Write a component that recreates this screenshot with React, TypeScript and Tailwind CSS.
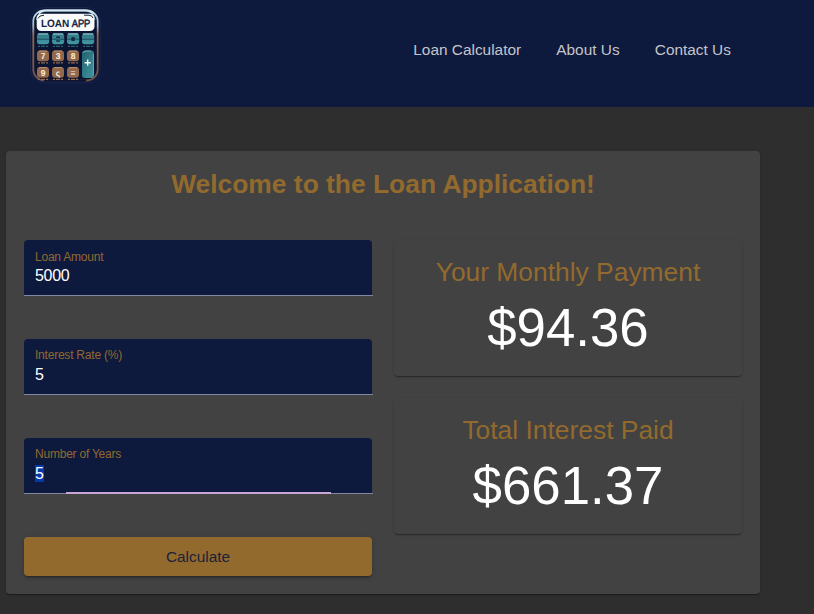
const keysTop = [37, 52, 67, 82];

const brownKeys = [
  { x: 37, y: 50.5, label: "7" },
  { x: 52, y: 50.5, label: "3" },
  { x: 67, y: 50.5, label: "8" },
  { x: 37, y: 67, label: "9" },
  { x: 52, y: 67, label: "ς" },
  { x: 67, y: 67, label: "≡" },
];

function Logo() {
  return (
    <svg width="84" height="90" viewBox="24 0 84 90" className="block" fontFamily="'Liberation Sans', Arial, sans-serif" textRendering="geometricPrecision">
      <defs>
        <linearGradient id="teal" x1="0" x2="0" y1="0" y2="1">
          <stop offset="0" stopColor="#337484" />
          <stop offset="1" stopColor="#4199a4" />
        </linearGradient>
        <linearGradient id="plus" x1="0" x2="1" y1="0" y2="1">
          <stop offset="0" stopColor="#24606f" />
          <stop offset="1" stopColor="#3f98a2" />
        </linearGradient>
        <linearGradient id="rim" x1="0" x2="0" y1="0" y2="1">
          <stop offset="0" stopColor="#b9dce6" />
          <stop offset="0.22" stopColor="#a9bcc6" />
          <stop offset="0.36" stopColor="#8d6850" />
          <stop offset="1" stopColor="#6e5245" />
        </linearGradient>
      </defs>
      <rect x="30.5" y="7.5" width="70" height="75.5" rx="13" fill="#10173c" stroke="#15244a" strokeWidth="1" />
      <rect x="33.3" y="10.3" width="64.4" height="70.2" rx="11" fill="#0b1432" stroke="url(#rim)" strokeWidth="1.8" />
      <path d="M36.4 20Q37 12.5 45 11.2H86Q94 12 95 20" fill="none" stroke="#7e9fb0" strokeWidth="1" />
      <path d="M39 13.6Q41 10.6 47 10.4H84Q91 10.6 94 14" fill="none" stroke="#d3e9ee" strokeWidth="1.8" />
      <path d="M44 80.5H86" stroke="#0b1432" strokeWidth="2.4" />
      <rect x="36.7" y="13.7" width="57.8" height="17.4" rx="4.5" fill="#f8faf9" />
      <path d="M38 18.5Q39 15.3 44 15.2M84 15.2H89Q92 15.3 93 18" fill="none" stroke="#142442" strokeWidth="1" />
      <text x="40.9" y="26.6" fontSize="10.6" fontWeight="700" fill="#142344" textLength="28.5" lengthAdjust="spacingAndGlyphs">LOAN</text>
      <text x="71.7" y="26.6" fontSize="10.6" fill="#142344" stroke="#142344" strokeWidth="0.5" textLength="18.6" lengthAdjust="spacingAndGlyphs">APP</text>
      {keysTop.map((x, i) => (
        <g key={x}>
          <rect x={x} y="33.3" width="12.2" height="10.9" rx="2.4" fill="url(#teal)" />
          <path d={`M${x + 1} 34H${x + 11}`} stroke="#8cc3c9" strokeWidth="1.2" />
          <path d={`M${x} 39.2H${x + 12}`} stroke="#1b4357" strokeWidth="0.9" />
          {i === 1 && <path d={`M${x + 4.2} 37.2H${x + 8}M${x + 4.2} 41H${x + 8}`} stroke="#132c43" strokeWidth="1.6" />}
          {i === 2 && <rect x={x + 4.3} y="37.1" width="3.6" height="4" rx="1.2" fill="#132c43" />}
          <path d={`M${x + 1} 46.4H${x + 11}`} stroke="#2b6070" strokeWidth="1.2" strokeDasharray="2 1 4 1" />
        </g>
      ))}
      {brownKeys.map((k) => (
        <g key={`${k.x}-${k.y}`}>
          <rect x={k.x} y={k.y} width="12" height="10.8" rx="3" fill="#93694e" />
          <path d={`M${k.x + 2} ${k.y + 0.6}H${k.x + 10}`} stroke="#bd9270" strokeWidth="1" />
          <text x={k.x + 6} y={k.y + 8.6} fontSize="8.5" fontWeight="700" fill="#fff5df" textAnchor="middle">{k.label}</text>
          <path d={`M${k.x + 1} ${k.y + 12.4}H${k.x + 11}`} stroke="#94694e" strokeWidth="1.2" strokeDasharray="2 1 4 1" />
        </g>
      ))}
      <rect x="82" y="50.5" width="12" height="27.5" rx="3" fill="url(#plus)" />
      <path d="M83 53Q83.5 51 86 51H91" fill="none" stroke="#79b7bd" strokeWidth="0.9" />
      <path d="M93.4 54V75" stroke="#70aeb6" strokeWidth="0.8" />
      <path d="M84.6 62.7H90.8M87.7 59.6V65.8" stroke="#f3fbfa" strokeWidth="1.4" />
    </svg>
  );
}

function Field({ label, value, focused = false, raised = false }: { label: string; value: string; focused?: boolean; raised?: boolean }) {
  return (
    <div className="relative h-14 w-[349px]">
      <div className={`flex h-[55px] w-[348px] flex-col rounded-t-[4px] bg-[#0e193e] pl-[11px] ${raised ? "pt-[8px]" : "pt-[9px]"}`}>
        <label className="h-4 text-[12px] leading-4 tracking-[-0.22px] text-[#936a2d]">{label}</label>
        <div className={`flex text-[16px] leading-[17px] tracking-[-0.33px] text-white ${raised ? "mt-[3px]" : "mt-[2px]"}`}>
          <span className={focused ? "bg-[#0339a8]" : ""}>{value}</span>
        </div>
      </div>
      <div className="h-px bg-[#8288a0]" />
      {focused && <div className="absolute bottom-0 left-[42px] h-[2px] w-[265px] bg-[#c9a5d6]" />}
    </div>
  );
}

function Result({ title, amount }: { title: string; amount: string }) {
  return (
    <section className="flex h-[136px] w-[348px] flex-col items-center rounded-[4px] bg-[#424242] pt-4 shadow-[0_2px_1px_-1px_rgba(0,0,0,.2),0_1px_1px_0_rgba(0,0,0,.14),0_1px_3px_0_rgba(0,0,0,.12)]">
      <h2 className="text-[26.4px] leading-8 text-[#936a2d]">{title}</h2>
      <p className="mt-[10px] text-[52.8px] leading-[60px] text-white">{amount}</p>
    </section>
  );
}

export default function App() {
  return (
    <div className="h-[614px] w-[814px] overflow-hidden bg-[#2e2e2e] font-['Liberation_Sans',Arial,sans-serif]">
      <header className="flex h-[107px] bg-[#0e193e] pl-6">
        <Logo />
        <nav className="flex gap-[35.2px] pl-[305.3px] pt-[40px] text-[15.4px] leading-5 text-[#c4c5c9]">
          <a>Loan Calculator</a>
          <a>About Us</a>
          <a>Contact Us</a>
        </nav>
      </header>
      <main className="ml-[6px] mt-11 h-[443px] w-[754px] rounded-[4px] bg-[#424242] px-[18px] pt-[17px] shadow-[0_2px_1px_-1px_rgba(0,0,0,.2),0_1px_1px_0_rgba(0,0,0,.14),0_1px_3px_0_rgba(0,0,0,.12)]">
        <h1 className="h-8 text-center text-[26.4px] font-bold leading-8 text-[#936a2d]">Welcome to the Loan Application!</h1>
        <div className="mt-10 flex gap-[21px]">
          <form className="flex flex-col gap-[43px]">
            <Field label="Loan Amount" value="5000" />
            <Field label="Interest Rate (%)" value="5" raised />
            <Field label="Number of Years" value="5" focused raised />
            <button type="button" className="h-[39px] w-[348px] rounded-[4px] bg-[#936a2d] pt-px text-[15.4px] text-[#202238] shadow-[0_3px_1px_-2px_rgba(0,0,0,.2),0_2px_2px_0_rgba(0,0,0,.14),0_1px_5px_0_rgba(0,0,0,.12)]">Calculate</button>
          </form>
          <div className="flex flex-col gap-[22px]">
            <Result title="Your Monthly Payment" amount="$94.36" />
            <Result title="Total Interest Paid" amount="$661.37" />
          </div>
        </div>
      </main>
    </div>
  );
}
